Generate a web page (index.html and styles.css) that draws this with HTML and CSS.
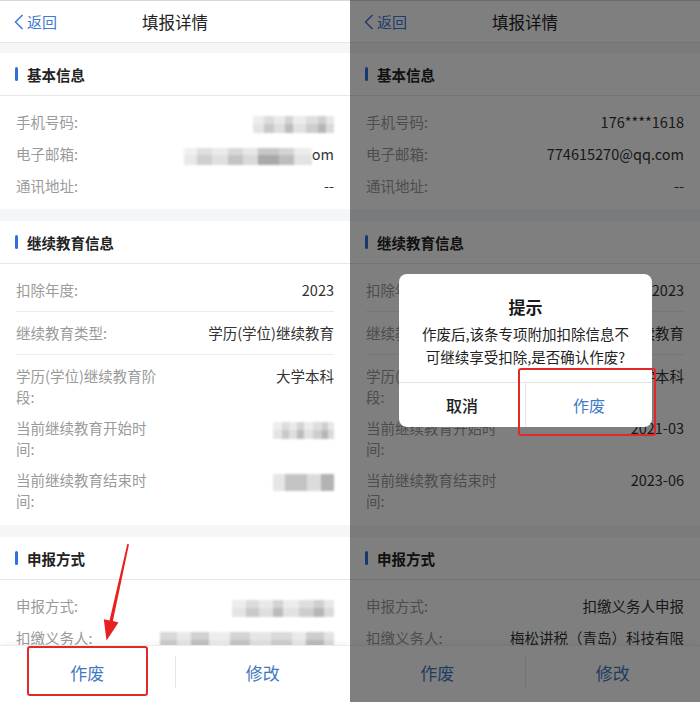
FILE: index.html
```html
<!DOCTYPE html>
<html lang="zh-CN">
<head>
<meta charset="utf-8">
<title>填报详情</title>
<link rel="stylesheet" href="styles.css">
</head>
<body>
  <div class="phone">
    <div class="nav">
      <div class="back"><svg class="chev" viewBox="0 0 10 16" width="10" height="16"><polyline points="8.5,1 1.5,8 8.5,15" fill="none" stroke="currentColor" stroke-width="1.5"/></svg>返回</div>
      <div class="title">填报详情</div>
      <div></div>
    </div>
    <div class="content">
      <div class="section">
        <div class="sec-head">基本信息</div>
        <div class="rows">
          <div class="row"><span class="label">手机号码:</span><span class="value"><span class="mosaic m-phone"></span></span></div>
          <div class="row"><span class="label">电子邮箱:</span><span class="value"><span class="mosaic m-mail"></span>om</span></div>
          <div class="row"><span class="label">通讯地址:</span><span class="value">--</span></div>
        </div>
      </div>
      <div class="section">
        <div class="sec-head">继续教育信息</div>
        <div class="rows edu">
          <div class="row r-first sep"><span class="label">扣除年度:</span><span class="value">2023</span></div>
          <div class="row r-mid sep"><span class="label">继续教育类型:</span><span class="value">学历(学位)继续教育</span></div>
          <div class="row r-two"><span class="label">学历(学位)继续教育阶段:</span><span class="value">大学本科</span></div>
          <div class="row r-two"><span class="label">当前继续教育开始时间:</span><span class="value"><span class="mosaic m-date"></span></span></div>
          <div class="row r-two"><span class="label">当前继续教育结束时间:</span><span class="value"><span class="mosaic m-date2"></span></span></div>
        </div>
      </div>
      <div class="section">
        <div class="sec-head">申报方式</div>
        <div class="rows">
          <div class="row"><span class="label">申报方式:</span><span class="value"><span class="mosaic m-way"></span></span></div>
          <div class="row"><span class="label">扣缴义务人:</span><span class="value"><span class="mosaic m-org"></span></span></div>
        </div>
      </div>
    </div>
    <div class="footer">
      <div class="btn">作废</div>
      <div class="divider"></div>
      <div class="btn">修改</div>
    </div>
    <svg class="arrow" viewBox="0 0 350 702" width="350" height="702"><polygon points="127.3,543.9 129,544.2 112.9,621.1 118.5,622.4 106.5,640.5 103.8,619.2 109.5,620.5" fill="#e8201f"/></svg>
    <div class="mark mark-left"></div>
  </div>

  <div class="phone">
    <div class="nav">
      <div class="back"><svg class="chev" viewBox="0 0 10 16" width="10" height="16"><polyline points="8.5,1 1.5,8 8.5,15" fill="none" stroke="currentColor" stroke-width="1.5"/></svg>返回</div>
      <div class="title">填报详情</div>
      <div></div>
    </div>
    <div class="content">
      <div class="section">
        <div class="sec-head">基本信息</div>
        <div class="rows">
          <div class="row"><span class="label">手机号码:</span><span class="value">176****1618</span></div>
          <div class="row"><span class="label">电子邮箱:</span><span class="value">774615270@qq.com</span></div>
          <div class="row"><span class="label">通讯地址:</span><span class="value">--</span></div>
        </div>
      </div>
      <div class="section">
        <div class="sec-head">继续教育信息</div>
        <div class="rows edu">
          <div class="row r-first sep"><span class="label">扣除年度:</span><span class="value">2023</span></div>
          <div class="row r-mid sep"><span class="label">继续教育类型:</span><span class="value">学历(学位)继续教育</span></div>
          <div class="row r-two"><span class="label">学历(学位)继续教育阶段:</span><span class="value">大学本科</span></div>
          <div class="row r-two"><span class="label">当前继续教育开始时间:</span><span class="value">2021-03</span></div>
          <div class="row r-two"><span class="label">当前继续教育结束时间:</span><span class="value">2023-06</span></div>
        </div>
      </div>
      <div class="section">
        <div class="sec-head">申报方式</div>
        <div class="rows">
          <div class="row"><span class="label">申报方式:</span><span class="value">扣缴义务人申报</span></div>
          <div class="row"><span class="label">扣缴义务人:</span><span class="value">梅松讲税（青岛）科技有限公司</span></div>
        </div>
      </div>
    </div>
    <div class="footer">
      <div class="btn">作废</div>
      <div class="divider"></div>
      <div class="btn">修改</div>
    </div>
    <div class="overlay"></div>
    <div class="dialog">
      <div class="dlg-title">提示</div>
      <div class="dlg-msg">作废后,该条专项附加扣除信息不<br>可继续享受扣除,是否确认作废?</div>
      <div class="dlg-btns">
        <div class="dlg-btn cancel">取消</div>
        <div class="dlg-btn ok">作废</div>
      </div>
    </div>
    <div class="mark mark-right"></div>
  </div>
</body>
</html>
```

FILE: styles.css
```css
* { box-sizing: border-box; margin: 0; padding: 0; }
html, body { width: 700px; height: 702px; overflow: hidden; }
body {
  display: flex;
  font-family: "Noto Sans CJK SC", "Noto Sans", sans-serif;
  color: #333;
  background: #f5f6f8;
}
.phone {
  position: relative;
  width: 350px;
  height: 702px;
  display: flex;
  flex-direction: column;
  background: #f5f6f8;
  overflow: hidden;
}
.nav {
  flex: none;
  height: 43px;
  background: #fff;
  border-top: 1px solid #d8d8d8;
  border-bottom: 1px solid #e4e6ea;
  display: grid;
  grid-template-columns: 1fr auto 1fr;
  align-items: center;
  padding: 0 14px;
}
.back {
  display: flex;
  align-items: center;
  gap: 3px;
  color: #3d7bd4;
  font-size: 15px;
}
.chev { display: block; }
.title { font-size: 16.5px; color: #222; }
.content {
  flex: 1;
  min-height: 0;
  overflow: hidden;
  display: flex;
  flex-direction: column;
  gap: 12px;
  padding-top: 10px;
}
.section { flex: none; background: #fff; }
.sec-head {
  height: 43px;
  border-bottom: 1px solid #e8e8e8;
  display: flex;
  align-items: center;
  gap: 9px;
  padding-left: 15px;
  font-size: 14.5px;
  font-weight: 700;
  color: #222;
}
.sec-head::before {
  content: "";
  width: 3px;
  height: 14px;
  border-radius: 2px;
  background: #2f6fde;
}
.rows { padding: 10px 16px 7px; }
.row {
  display: flex;
  align-items: flex-start;
  font-size: 14.5px;
  line-height: 32px;
}
.label { flex: none; width: 143px; color: #9a9a9a; }
.value { flex: 1; text-align: right; color: #333; }
.rows.edu { padding: 0 16px 14px; }
.row.sep { border-bottom: 1px solid #ececec; }
.row.r-first { padding: 15px 0 10px; line-height: 22px; }
.row.r-mid { padding: 10px 0; line-height: 22px; }
.row.r-two { padding-top: 10px; line-height: 21px; }

.mosaic {
  display: inline-block;
  height: 17px;
  vertical-align: middle;
  filter: blur(1.3px);
  background:
    linear-gradient(180deg, rgba(255,255,255,.35) 0 45%, rgba(0,0,0,0) 45%),
    linear-gradient(90deg, #e4e4e4 0 14%, #c9c9c9 14% 26%, #dedede 26% 40%, #bcbcbc 40% 50%, #e2e2e2 50% 66%, #cdcdcd 66% 80%, #b6b6b6 80% 90%, #dadada 90%);
}
.m-phone { width: 81px; }
.m-mail {
  width: 128px;
  background:
    linear-gradient(180deg, rgba(255,255,255,.35) 0 40%, rgba(0,0,0,0) 40%),
    linear-gradient(90deg, #e8e8e8 0 10%, #cfcfcf 10% 22%, #e0e0e0 22% 34%, #c4c4c4 34% 46%, #dadada 46% 58%, #a9a9a9 58% 74%, #bdbdbd 74% 86%, #e3e3e3 86%);
}
.m-date { width: 61px; }
.m-date2 {
  width: 61px;
  background: linear-gradient(90deg, #e6e6e6 0 20%, #c4c4c4 20% 55%, #dcdcdc 55% 78%, #b3b3b3 78%);
}
.m-way { width: 102px; }
.m-org {
  width: 174px;
  background:
    linear-gradient(180deg, rgba(255,255,255,.3) 0 45%, rgba(0,0,0,0) 45%),
    linear-gradient(90deg, #c8c8c8 0 10%, #e0e0e0 10% 18%, #bdbdbd 18% 28%, #e6e6e6 28% 40%, #c2c2c2 40% 52%, #dcdcdc 52% 64%, #cbcbcb 64% 76%, #e2e2e2 76% 84%, #b8b8b8 84% 94%, #d6d6d6 94%);
}

.footer {
  flex: none;
  height: 57px;
  padding-bottom: 4px;
  background: #fff;
  border-top: 1px solid #ececec;
  box-shadow: 0 -2px 6px rgba(0, 0, 0, 0.05);
  display: flex;
  align-items: center;
}
.btn {
  flex: 1;
  text-align: center;
  font-size: 17px;
  color: #4278c0;
}
.divider { width: 1px; height: 32px; background: #e6e6e6; }

.arrow { position: absolute; left: 0; top: 0; pointer-events: none; }
.mark {
  position: absolute;
  border: 2px solid #e3282a;
  border-radius: 3px;
}
.mark-left { left: 27px; top: 646px; width: 121px; height: 50px; }
.mark-right { left: 168px; top: 368px; width: 138px; height: 68px; }

.overlay { position: absolute; inset: 0; background: rgba(0, 0, 0, 0.5); }
.dialog {
  position: absolute;
  left: 49px;
  top: 274px;
  width: 253px;
  background: #fff;
  border-radius: 8px;
  overflow: hidden;
}
.dlg-title {
  padding-top: 22px;
  text-align: center;
  font-size: 17px;
  font-weight: 700;
  line-height: 22px;
  color: #1a1a1a;
}
.dlg-msg {
  padding: 4px 0 14px;
  text-align: center;
  font-size: 14.5px;
  line-height: 23px;
  color: #222;
  white-space: nowrap;
}
.dlg-btns {
  display: flex;
  height: 45px;
  border-top: 1px solid #e4e4e4;
}
.dlg-btn {
  flex: 1;
  display: flex;
  align-items: center;
  justify-content: center;
  font-size: 16px;
}
.dlg-btn.cancel { color: #222; font-weight: 500; border-right: 1px solid #e4e4e4; }
.dlg-btn.ok { color: #3f7cc8; }
```
